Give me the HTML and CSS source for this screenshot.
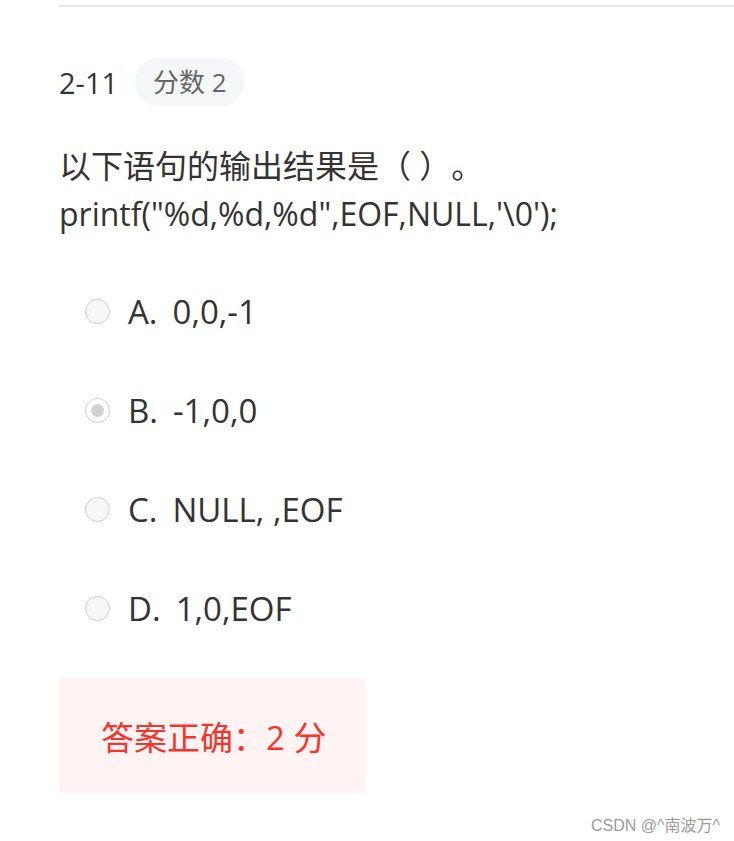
FILE: index.html
```html
<!DOCTYPE html>
<html lang="zh">
<head>
<meta charset="utf-8">
<title>2-11</title>
<link rel="stylesheet" href="styles.css">
</head>
<body>
<div class="page">
  <div class="rule"></div>
  <div class="head">
    <span class="num">2-11</span>
    <span class="badge">分数 2</span>
  </div>
  <div class="question">
    <div>以下语句的输出结果是（ ）。</div>
    <div>printf("%d,%d,%d",EOF,NULL,'\0');</div>
  </div>
  <ul class="options">
    <li class="opt"><span class="radio"></span><span class="label">A.</span><span class="val">0,0,-1</span></li>
    <li class="opt"><span class="radio checked"></span><span class="label">B.</span><span class="val">-1,0,0</span></li>
    <li class="opt"><span class="radio"></span><span class="label">C.</span><span class="val">NULL, ,EOF</span></li>
    <li class="opt"><span class="radio"></span><span class="label">D.</span><span class="val">1,0,EOF</span></li>
  </ul>
  <div class="result">答案正确：2 分</div>
</div>
<div class="watermark">CSDN @^南波万^</div>
</body>
</html>
```

FILE: styles.css
```css
html, body {
  margin: 0;
  padding: 0;
  background: #fff;
}
body {
  font-family: "Open Sans", "Noto Sans CJK SC", sans-serif;
  color: #333;
  width: 734px;
  height: 841px;
  position: relative;
  overflow: hidden;
  text-spacing-trim: space-all;
}
.page {
  padding-left: 59px;
  padding-top: 5px;
}
.rule {
  border-top: 2px solid #e6e6e6;
}
.head {
  display: flex;
  align-items: center;
  margin-top: 51px;
  height: 48px;
}
.num {
  font-size: 29px;
  color: #333;
}
.badge {
  margin-left: 17px;
  height: 48px;
  line-height: 48px;
  padding: 0 17px 0 18px;
  border-radius: 24px;
  background: #f5f6f7;
  color: #666;
  font-size: 26px;
}
.question {
  margin-top: 36px;
  font-size: 32px;
  line-height: 48px;
  color: #333;
}
.options {
  list-style: none;
  margin: 49px 0 0 0;
  padding: 0 0 0 26px;
  display: flex;
  flex-direction: column;
  gap: 51px;
}
.opt {
  display: flex;
  align-items: center;
  height: 48px;
  font-size: 33px;
  color: #333;
}
.radio {
  box-sizing: border-box;
  width: 25px;
  height: 25px;
  border-radius: 50%;
  border: 1.5px solid #cfcfcf;
  background: #f7f7f7;
  margin-right: 18px;
  flex: none;
  display: flex;
  align-items: center;
  justify-content: center;
}
.radio.checked {
  background: #fff;
}
.radio.checked::after {
  content: "";
  width: 13px;
  height: 13px;
  border-radius: 50%;
  background: #d2d2d2;
}
.label {
  margin-right: 15px;
}
.result {
  margin-top: 46px;
  width: 307px;
  height: 115px;
  box-sizing: border-box;
  padding-left: 42px;
  display: flex;
  align-items: center;
  background: #fff3f3;
  color: #f5352b;
  font-size: 33px;
}
.watermark {
  position: absolute;
  right: 14px;
  top: 812px;
  font-family: "Liberation Sans", "Noto Sans CJK SC", sans-serif;
  font-size: 16px;
  color: #9a9a9a;
}
```
